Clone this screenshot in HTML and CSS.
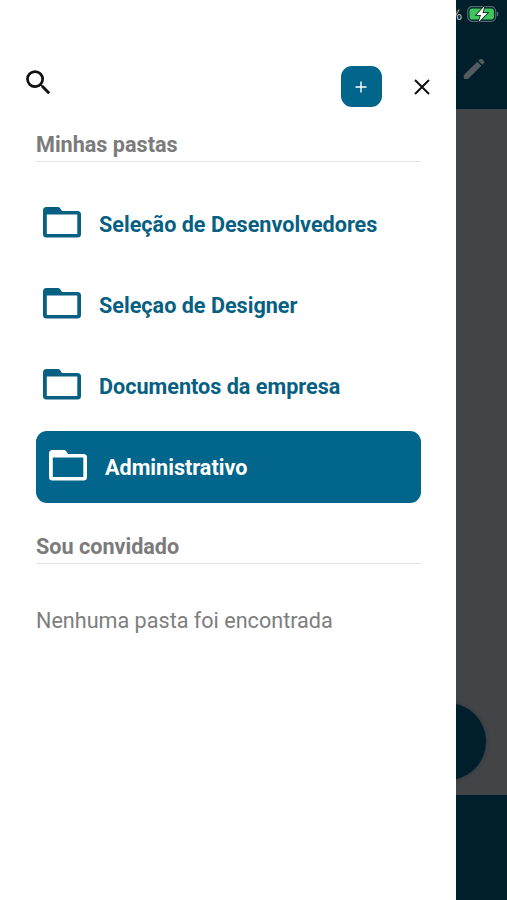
FILE: index.html
```
<!DOCTYPE html>
<html lang="pt-BR">
<head>
    <meta charset="UTF-8">
    <meta name="viewport" content="width=device-width, initial-scale=1.0">
    <title>Minhas pastas</title>
    <link rel="stylesheet" href="styles.css">
</head>
<body>
    <svg class="sprite" width="0" height="0">
        <symbol id="folder" viewBox="0 0 38 31">
            <path fill="currentColor" fill-rule="evenodd" d="M3.5 0H15q1.200 0 2 .9L19 4H34.500q3.500 0 3.500 3.500V27q0 3.500-3.500 3.500H3.500Q0 30.500 0 27V3.500Q0 0 3.500 0ZM3.800 7.500V26.900H34.300V7.500Z"/>
        </symbol>
    </svg>

    <div class="app">
        <aside class="drawer">
            <header class="toolbar">
                <svg class="search" viewBox="0 0 24 24">
                    <path d="M15.500 14h-.79l-.28-.27A6.470 6.470 0 0 0 16 9.500 6.500 6.500 0 1 0 9.500 16c1.610 0 3.090-.59 4.230-1.570l.27.28v.79l5 4.990L20.490 19l-4.990-5zm-6 0C7.010 14 5 11.990 5 9.500S7.010 5 9.500 5 14 7.010 14 9.500 11.990 14 9.500 14z"/>
                </svg>
                <button class="add" type="button" aria-label="Nova pasta">
                    <svg width="12" height="12" viewBox="0 0 12 12"><path d="M6 .5v11M.5 6h11"/></svg>
                </button>
                <svg class="close" viewBox="0 0 16 16"><path d="M1 1l14 14M15 1L1 15"/></svg>
            </header>

            <h2 class="section-title">Minhas pastas</h2>
            <ul class="folders">
                <li class="folder"><svg class="folder-icon"><use href="#folder"/></svg><span>Seleção de Desenvolvedores</span></li>
                <li class="folder"><svg class="folder-icon"><use href="#folder"/></svg><span>Seleçao de Designer</span></li>
                <li class="folder"><svg class="folder-icon"><use href="#folder"/></svg><span>Documentos da empresa</span></li>
                <li class="folder active"><svg class="folder-icon"><use href="#folder"/></svg><span>Administrativo</span></li>
            </ul>

            <h2 class="section-title guest-title">Sou convidado</h2>
            <p class="empty">Nenhuma pasta foi encontrada</p>
        </aside>

        <main class="page">
            <div class="page-header">
                <div class="status">
                    <span class="percent">%</span>
                    <svg class="battery" width="32" height="18" viewBox="0 0 32 18">
                        <rect x=".7" y="1.700" width="28" height="14.600" rx="4.500" fill="none" stroke="#536a70" stroke-width="1.200"/>
                        <rect x="2.500" y="3.500" width="24.500" height="11" rx="2.800" fill="#3fc65b"/>
                        <path d="M30.500 7v4" stroke="#536a70" stroke-width="1.500"/>
                        <path d="M17.500 1L9.500 10H14L11.500 17L20.500 8H15.500Z" fill="#fff" stroke="#06251f" stroke-width="1.600" paint-order="stroke"/>
                    </svg>
                </div>
                <svg class="pencil" width="22" height="22" viewBox="0 0 22 22">
                    <path d="M.8 17L14.300 3.800l4 4L5 21H2Q.8 21 .8 19.800ZM15.300 2.800L17 1.100q1-.9 2 0l2 2q.9 1 0 2l-1.700 1.700Z"/>
                </svg>
            </div>
            <div class="page-body">
                <div class="fab"></div>
            </div>
            <div class="page-footer"></div>
        </main>
    </div>
</body>
</html>
```
FILE: styles.css
```
body {
    margin: 0;
    font-family: Roboto, sans-serif;
    background: #fff;
}

.sprite {
    position: absolute;
}

.app {
    display: flex;
    height: 900px;
    overflow: hidden;
}

.drawer {
    box-sizing: border-box;
    flex: none;
    width: 456.4px;
    padding: 66px 35.4px 0 36px;
    background: #fff;
}

.toolbar {
    display: flex;
    align-items: center;
    height: 41px;
    margin: 0 -8.5px 0 -14px;
}

.search {
    width: 33px;
    height: 33px;
    margin: -8px auto 0 0;
    fill: #111;
}

.add {
    display: flex;
    align-items: center;
    justify-content: center;
    width: 41px;
    height: 41px;
    padding: 0;
    border: none;
    border-radius: 11px;
    background: #02658b;
}

.add path {
    stroke: #fff;
    stroke-width: 1.4;
}

.close {
    width: 16px;
    height: 16px;
    margin-left: 32px;
}

.close path {
    stroke: #111;
    stroke-width: 2;
}

.section-title {
    box-sizing: border-box;
    height: 31px;
    margin: 24px 0 0;
    border-bottom: 1px solid #e2e2e2;
    font-size: 21.6px;
    font-weight: bold;
    line-height: 28px;
    color: #7b7b7b;
}

.folders {
    display: flex;
    flex-direction: column;
    gap: 9px;
    margin: 26px 0 0;
    padding: 0;
    list-style: none;
}

.folder {
    display: flex;
    align-items: center;
    gap: 18px;
    height: 72px;
    padding-left: 7px;
    border-radius: 11px;
    font-size: 21.6px;
    font-weight: bold;
    color: #075f82;
}

.folder-icon {
    width: 38px;
    height: 31px;
    margin-top: -3px;
}

.active {
    padding-left: 13px;
    background: #02658b;
    color: #fff;
}

.guest-title {
    margin-top: 30px;
}

.empty {
    margin: 43px 0 0;
    font-size: 21.6px;
    line-height: 28px;
    color: #7e7e7e;
}

.page {
    display: flex;
    flex: 1;
    flex-direction: column;
    overflow: hidden;
    background: #434446;
}

.page-header {
    height: 109px;
    background: #011f2b;
}

.status {
    display: flex;
    align-items: center;
    height: 18px;
    padding-top: 5px;
}

.percent {
    width: 8px;
    margin: 0 4px 0 -6px;
    font-size: 16px;
    color: #b4bdc0;
}

.battery {
    flex: none;
    margin-left: 5px;
}

.pencil {
    display: block;
    margin: 35px 0 0 7px;
    fill: #535b60;
}

.page-body {
    display: flex;
    flex: 1;
    align-items: flex-end;
}

.fab {
    flex: none;
    width: 77px;
    height: 77px;
    margin: 0 0 15px -47px;
    border-radius: 50%;
    background: #011f2b;
    box-shadow: 0 0 4px #233642;
}

.page-footer {
    height: 105px;
    background: #011f2b;
}
```
